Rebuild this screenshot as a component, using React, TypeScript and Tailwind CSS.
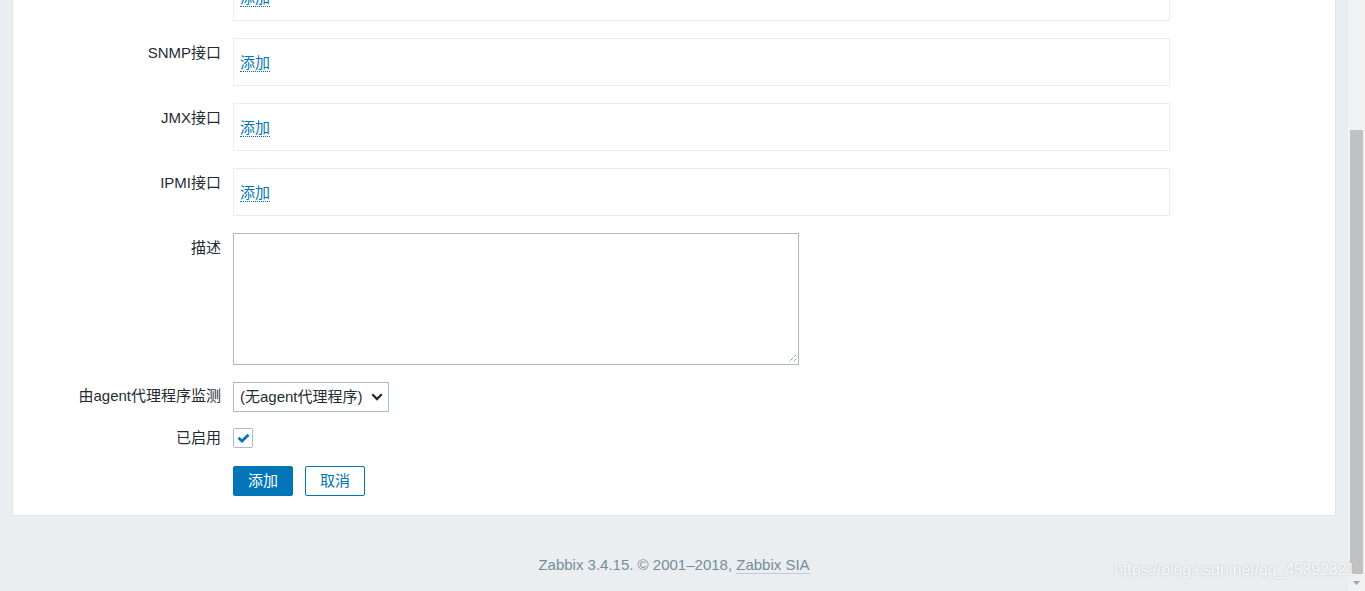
import React from 'react';

const FONT = { fontFamily: '"Liberation Sans", Arial, "Noto Sans CJK SC", sans-serif' };

const Label: React.FC<{ text: string }> = ({ text }) => (
  <div className="w-[208px] shrink-0 text-right pt-[4px] leading-[22px] text-[15px] text-[#1f2c33]">{text}</div>
);

const InterfaceRow: React.FC<{ label: string; className?: string }> = ({ label, className }) => (
  <div className={`flex gap-[12px] ${className ?? ''}`}>
    <Label text={label} />
    <div className="w-[937px] h-[48px] border border-[#ebeef0] pt-[13px] pl-[6px] leading-[22px] text-[15px]">
      <span className="text-[#0275b8] border-b border-dotted border-[#0275b8] cursor-pointer">添加</span>
    </div>
  </div>
);

const App: React.FC = () => {
  return (
    <div className="h-[591px] w-full flex overflow-hidden bg-[#ebeef0] relative" style={FONT}>
      <div className="flex-1 flex flex-col">
        <div className="mx-[12px] -mt-[28px] bg-white border border-[#dfe4e7] pb-[19px] flex flex-col">
          <InterfaceRow label="" />
          <InterfaceRow label="SNMP接口" className="mt-[17px]" />
          <InterfaceRow label="JMX接口" className="mt-[17px]" />
          <InterfaceRow label="IPMI接口" className="mt-[17px]" />

          <div className="flex gap-[12px] mt-[17px]">
            <Label text="描述" />
            <div className="relative w-[566px] h-[132px] border border-[#acbbc4] bg-white">
              <svg className="absolute right-[1px] bottom-[1px]" width="10" height="10" viewBox="0 0 10 10">
                <path d="M9 2 L2 9 M9 6 L6 9" stroke="#666" strokeWidth="1" strokeDasharray="1 1" />
              </svg>
            </div>
          </div>

          <div className="flex gap-[12px] mt-[17px]">
            <div className="w-[208px] shrink-0 text-right pt-[3px] leading-[22px] text-[15px] text-[#1f2c33]">
              由agent代理程序监测
            </div>
            <div className="w-[156px] h-[30px] border border-[#acbbc4] flex items-center justify-between pl-[6px] pr-[5px] text-[15px] text-[#1f2c33] bg-white">
              <span>(无agent代理程序)</span>
              <svg width="12" height="8" viewBox="0 0 12 8">
                <path d="M1.3 1.3 L6 6 L10.7 1.3" fill="none" stroke="#1f2c33" strokeWidth="2.3" />
              </svg>
            </div>
          </div>

          <div className="flex gap-[12px] mt-[15px] items-center">
            <div className="w-[208px] shrink-0 text-right leading-[22px] text-[15px] text-[#1f2c33]">已启用</div>
            <div className="w-[20px] h-[20px] border border-[#acbbc4] rounded-[2px] bg-white flex items-center justify-center">
              <svg width="13" height="10" viewBox="0 0 13 10">
                <path d="M1.5 4.8 L5 8 L11.5 1.8" fill="none" stroke="#0275b8" strokeWidth="2.8" />
              </svg>
            </div>
          </div>

          <div className="flex gap-[12px] mt-[17px]">
            <div className="w-[208px] shrink-0" />
            <div className="flex gap-[12px]">
              <button className="w-[60px] h-[30px] bg-[#0275b8] border border-[#0275b8] rounded-[2px] text-white text-[15px]">添加</button>
              <button className="w-[60px] h-[30px] bg-white border border-[#0275b8] rounded-[2px] text-[#0275b8] text-[15px]">取消</button>
            </div>
          </div>
        </div>

        <div className="mt-[39px] text-center text-[15px] leading-[20px] text-[#768d99]">
          Zabbix 3.4.15. © 2001–2018,{' '}
          <span className="border-b border-[#c3ccd1]">Zabbix SIA</span>
        </div>
      </div>

      <div className="w-[17px] shrink-0 bg-[#f1f1f1] flex flex-col">
        <div className="h-[130px]" />
        <div className="flex-1 mx-[2px] bg-[#c1c1c1]" />
        <div className="h-[17px] flex items-center justify-center">
          <svg width="7" height="4" viewBox="0 0 7 4">
            <path d="M0 0 L7 0 L3.5 4 Z" fill="#a3a3a3" />
          </svg>
        </div>
      </div>

      <div
        className="absolute right-[10px] bottom-[11px] text-[15.7px] leading-[20px] text-white/90"
        style={{ textShadow: '0 0 2px rgba(120,130,140,0.5)' }}
      >
        https://blog.csdn.net/qq_45392321
      </div>
    </div>
  );
};

export default App;
